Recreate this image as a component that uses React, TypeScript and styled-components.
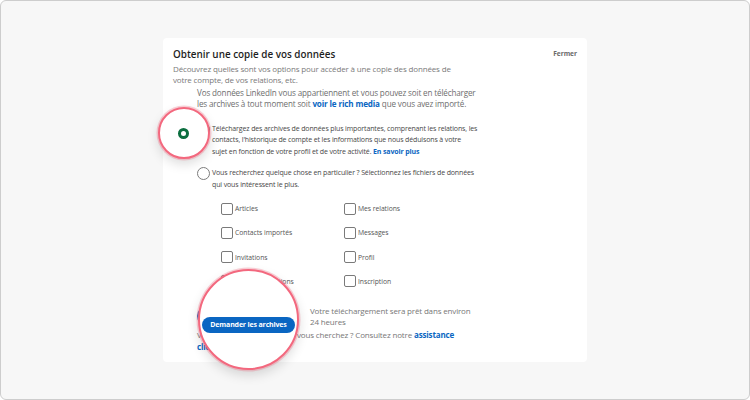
import React, { useState } from 'react';
import styled, { createGlobalStyle } from 'styled-components';

const GlobalStyle = createGlobalStyle`
    html, body {
        margin: 0;
        padding: 0;
        background: #ffffff;
    }
    body {
        font-family: "Open Sans", "Noto Sans", sans-serif;
    }
    * {
        box-sizing: border-box;
    }
`;

const files = [
    'Articles', 'Mes relations',
    'Contacts importés', 'Messages',
    'Invitations', 'Profil',
    'Recommandations', 'Inscription',
];

const App = () => {
    const [picked, setPicked] = useState<string[]>([]);

    const toggle = (name: string) => {
        setPicked(picked.includes(name) ? picked.filter(p => p !== name) : [...picked, name]);
    };

    return (
        <>
            <GlobalStyle />
            <Frame>
                <Card>
                    <Header>
                        <Title>Obtenir une copie de vos données</Title>
                        <Close>Fermer</Close>
                    </Header>
                    <Subtitle>
                        Découvrez quelles sont vos options pour accéder à une copie des données de<br />
                        votre compte, de vos relations, etc.
                    </Subtitle>

                    <Body>
                        <Intro>
                            Vos données LinkedIn vous appartiennent et vous pouvez soit en télécharger<br />
                            les archives à tout moment soit <Link>voir le rich media</Link> que vous avez importé.
                        </Intro>

                        <Option first>
                            <Radio checked />
                            <OptionText>
                                Téléchargez des archives de données plus importantes, comprenant les relations, les<br />
                                contacts, l'historique de compte et les informations que nous déduisons à votre<br />
                                sujet en fonction de votre profil et de votre activité. <Link>En savoir plus</Link>
                            </OptionText>
                        </Option>

                        <Option>
                            <Radio />
                            <OptionText>
                                Vous recherchez quelque chose en particulier ? Sélectionnez les fichiers de données<br />
                                qui vous intéressent le plus.
                            </OptionText>
                        </Option>

                        <CheckGrid>
                            {files.map((name) =>
                                <CheckItem key={name} onClick={() => toggle(name)}>
                                    <Box checked={picked.includes(name)} />
                                    <span>{name}</span>
                                </CheckItem>
                            )}
                        </CheckGrid>

                        <Footer>
                            <Button>Demander les archives</Button>
                            <Eta>Votre téléchargement sera prêt dans environ<br />24 heures</Eta>
                        </Footer>

                        <Help>
                            Vous ne trouvez pas ce que vous cherchez ? Consultez notre <Link>assistance</Link><br />
                            <Link>clientèle</Link>
                        </Help>
                    </Body>
                </Card>

                <Lens top={106} left={157} size={52}>
                    <BigRing />
                </Lens>

                <Lens top={268} left={197} size={101}>
                    <BigButton>Demander les archives</BigButton>
                </Lens>
            </Frame>
        </>
    );
};

export default App;

const Frame = styled.div`
    position: relative;
    width: 750px;
    height: 400px;
    background: #f7f7f7;
    border: 1px solid #cdcdcd;
    border-radius: 6px;
    overflow: hidden;
    padding-top: 37px;
`;

const Card = styled.div`
    width: 424px;
    height: 324px;
    margin: 0 auto;
    background: #ffffff;
    border-radius: 4px;
    padding: 9px 10px 0;
`;

const Header = styled.div`
    display: flex;
    justify-content: space-between;
    align-items: flex-start;
`;

const Title = styled.h1`
    margin: 0;
    font-size: 9.9px;
    line-height: 14px;
    font-weight: 600;
    color: #1e1e1e;
`;

const Close = styled.button`
    border: none;
    background: none;
    padding: 0;
    margin-top: 2px;
    font-family: inherit;
    font-size: 6.6px;
    font-weight: 700;
    color: #6a6a6a;
    cursor: pointer;
`;

const Subtitle = styled.p`
    margin: 2px 0 0;
    font-size: 8px;
    letter-spacing: -0.15px;
    line-height: 11px;
    color: #7a7a7a;
    white-space: nowrap;
`;

const Body = styled.div`
    padding-left: 24px;
`;

const Intro = styled.p`
    margin: 2px 0 0;
    font-size: 8.1px;
    letter-spacing: -0.15px;
    line-height: 11px;
    color: #6e6e6e;
    white-space: nowrap;
`;

const Link = styled.a`
    color: #0a66c2;
    font-weight: 700;
    cursor: pointer;
`;

const Option = styled.div<{ first?: boolean }>`
    display: flex;
    align-items: flex-start;
    gap: 2px;
    margin-top: ${p => p.first ? '13.5px' : '10px'};
`;

const Radio = styled.span<{ checked?: boolean }>`
    flex-shrink: 0;
    width: 13px;
    height: 13px;
    border-radius: 50%;
    border: ${p => p.checked ? '3px solid #0b6e3f' : '1px solid #7c7c7c'};
    background: #ffffff;
`;

const OptionText = styled.p`
    margin: 0;
    font-size: 7px;
    letter-spacing: -0.13px;
    line-height: 11.5px;
    color: #474747;
    white-space: nowrap;
`;

const CheckGrid = styled.div`
    display: grid;
    grid-template-columns: 123px 1fr;
    row-gap: 12.3px;
    padding-left: 24px;
    margin-top: 12.5px;
`;

const CheckItem = styled.label`
    display: flex;
    align-items: center;
    gap: 2px;
    font-size: 6.8px;
    letter-spacing: -0.05px;
    color: #555555;
    cursor: pointer;
`;

const Box = styled.span<{ checked?: boolean }>`
    width: 12px;
    height: 12px;
    border: 1px solid #7a7a7a;
    border-radius: 2px;
    background: ${p => p.checked ? '#0a66c2' : '#ffffff'};
`;

const Footer = styled.div`
    display: flex;
    align-items: center;
    gap: 21px;
    margin-top: 17.6px;
`;

const Button = styled.button`
    width: 92px;
    height: 20px;
    border: none;
    border-radius: 10px;
    background: #0a66c2;
    color: #ffffff;
    font-family: inherit;
    font-size: 6.5px;
    font-weight: 700;
    white-space: nowrap;
    padding: 0;
`;

const Eta = styled.p`
    margin: 0;
    font-size: 8px;
    letter-spacing: -0.16px;
    line-height: 11px;
    color: #777777;
    white-space: nowrap;
`;

const Help = styled.p`
    margin: 2px 0 0;
    font-size: 8px;
    letter-spacing: -0.15px;
    line-height: 12px;
    color: #777777;
    white-space: nowrap;
`;

const Lens = styled.div<{ top: number; left: number; size: number }>`
    position: absolute;
    top: ${p => p.top}px;
    left: ${p => p.left}px;
    width: ${p => p.size}px;
    height: ${p => p.size}px;
    border-radius: 50%;
    background: #ffffff;
    border: 2px solid #f3687e;
    box-shadow: 0 0 0 1.5px rgba(243, 104, 126, 0.3), 0 5px 12px rgba(0, 0, 0, 0.14);
    display: flex;
    align-items: center;
    justify-content: center;
`;

const BigRing = styled.span`
    width: 11px;
    height: 11px;
    margin-left: -2px;
    border-radius: 50%;
    border: 3px solid #0b6e3f;
`;

const BigButton = styled.button`
    width: 93px;
    height: 16px;
    margin-top: 10px;
    border: none;
    border-radius: 8px;
    background: #0a66c2;
    color: #ffffff;
    font-family: inherit;
    font-size: 7px;
    letter-spacing: -0.15px;
    font-weight: 700;
    white-space: nowrap;
    padding: 0;
`;
